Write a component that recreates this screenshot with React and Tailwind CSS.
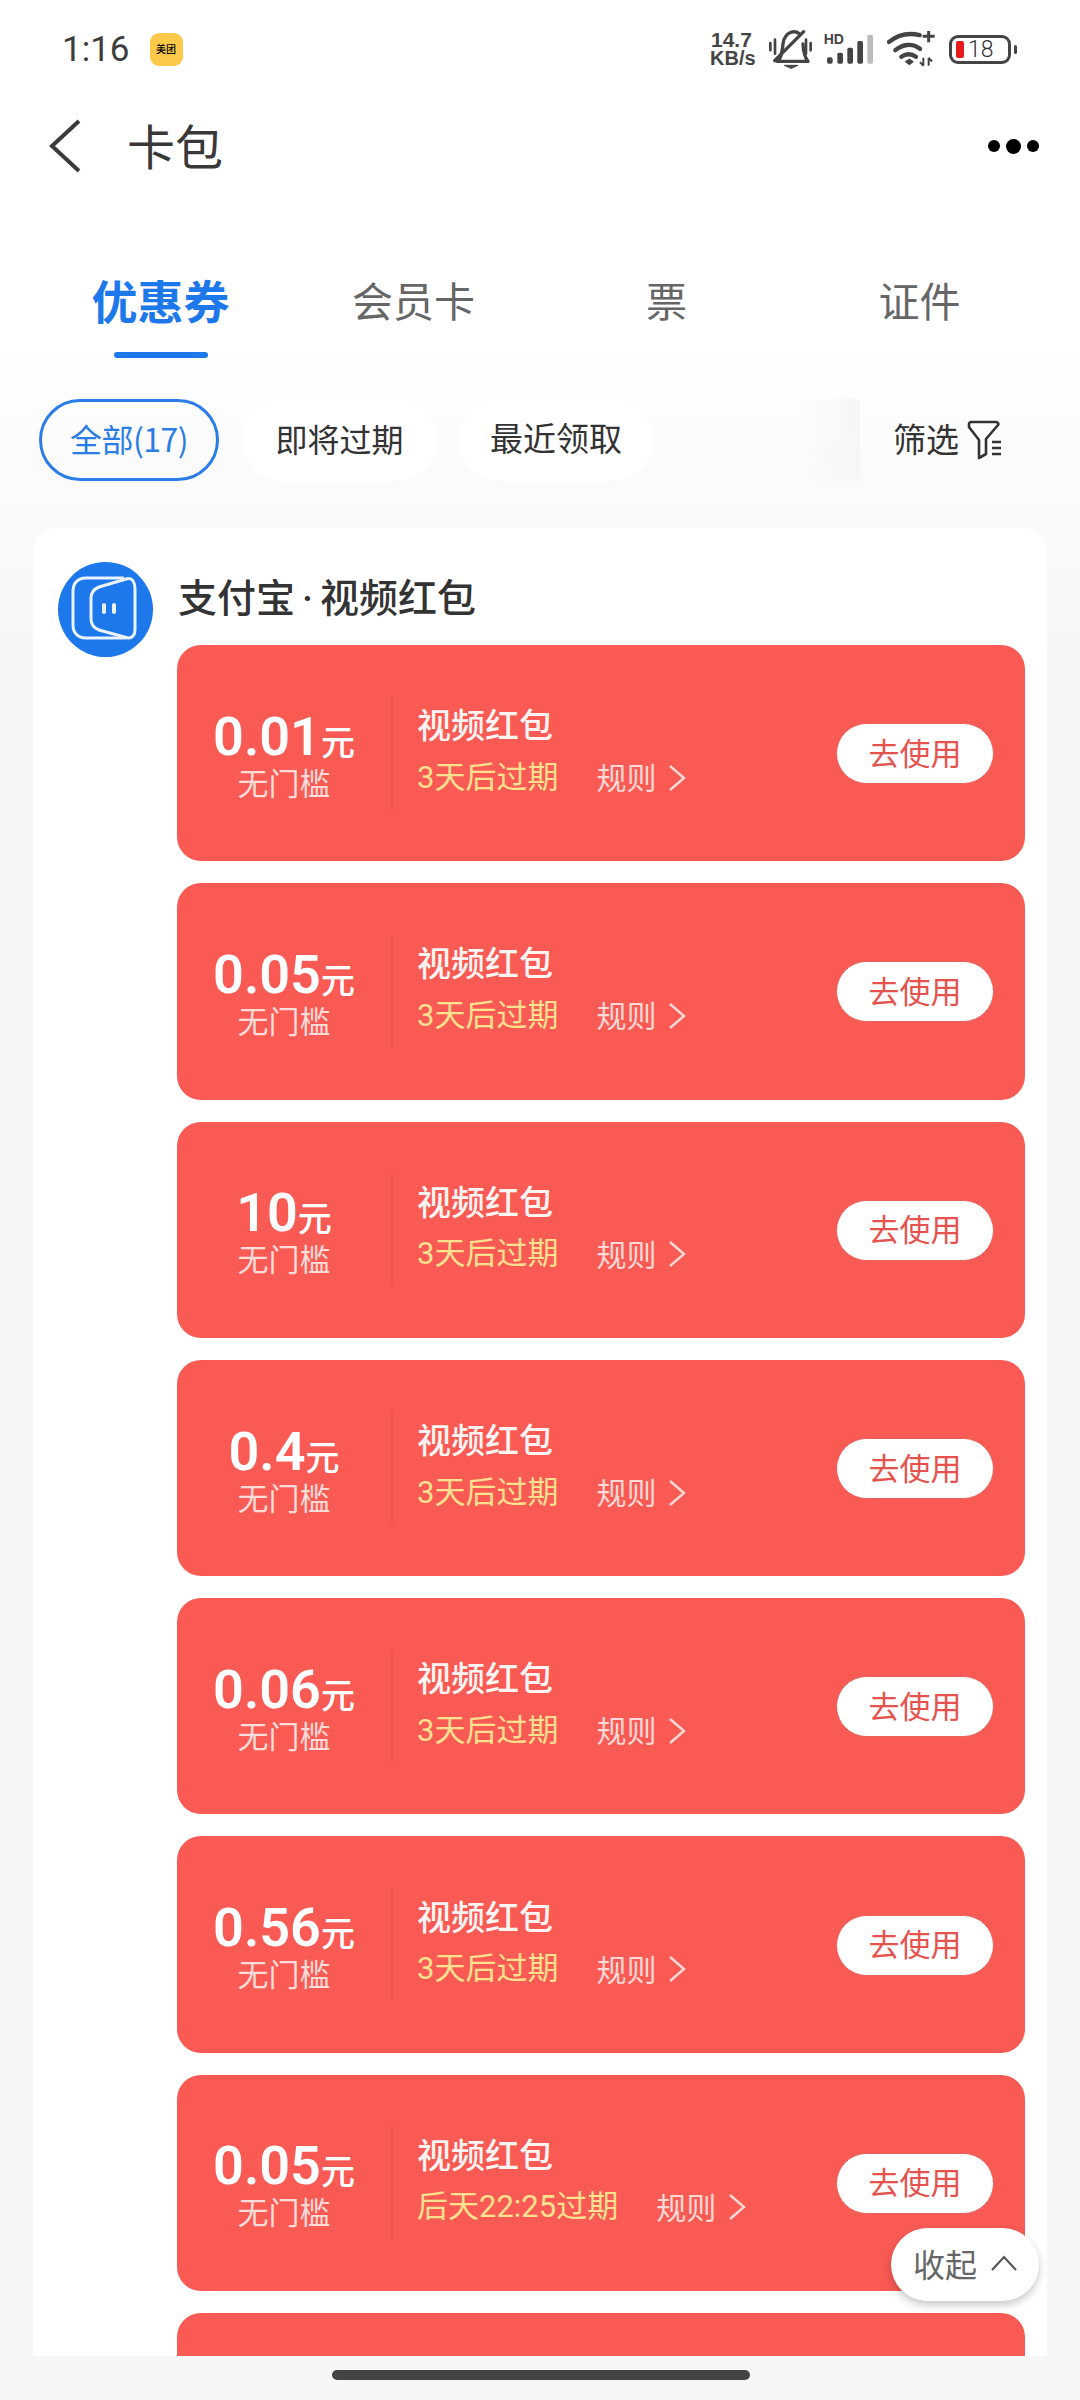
const CJK = '"Noto Sans CJK SC", "Noto Sans", sans-serif';
const NUM = 'Roboto, "Noto Sans CJK SC", sans-serif';

const coupons = [
  { n: '0.01', e: '3天后过期' },
  { n: '0.05', e: '3天后过期' },
  { n: '10', e: '3天后过期' },
  { n: '0.4', e: '3天后过期' },
  { n: '0.06', e: '3天后过期' },
  { n: '0.56', e: '3天后过期' },
  { n: '0.05', e: '后天22:25过期' },
];

function StatusBar() {
  return (
    <div className="box-content flex h-[64px] items-center justify-between pl-[62px] pr-[63px] pt-[17px] text-[#3d3d3d]">
      <div className="flex items-center">
        <span className="text-[35px] font-normal leading-none" style={{ fontFamily: 'Roboto, sans-serif' }}>1:16</span>
        <span className="ml-[20px] flex h-[33px] w-[33px] items-center justify-center rounded-[9px] bg-[#fcc94a] text-[10px] font-medium leading-none text-black" style={{ fontFamily: CJK }}>美团</span>
      </div>
      <div className="flex items-center">
        <div className="flex w-[50px] flex-col items-start font-bold leading-none text-[#444]" style={{ fontFamily: '"Liberation Sans", sans-serif' }}>
          <span className="pl-[1px] text-[21px] leading-[18px]">14.7</span>
          <span className="text-[20px] leading-[18px]">KB/s</span>
        </div>
        <svg className="ml-[8px]" width="45" height="40" viewBox="205 30 135 120" fill="none" stroke="#444" strokeWidth="10" strokeLinecap="round" strokeLinejoin="round">
          <path d="M212 72v22M226 62v42M333 72v22M319 62v42" strokeWidth="8" />
          <path d="M236 127c10-15 12-30 14-52 2-20 14-35 32-37 8 0 14 3 20 9" />
          <path d="M310 75c1 22 4 38 15 52H232" />
          <path d="M255 139h40l-20 9z" fill="#444" strokeWidth="3" />
          <path d="M312 38 225 125" />
        </svg>
        <svg className="ml-[11px] overflow-visible" width="50" height="30" viewBox="375 42 150 90">
          <text x="374" y="72" fontSize="42" fontWeight="700" fill="#444" fontFamily="Liberation Sans">HD</text>
          <rect x="384" y="112" width="17" height="19" rx="6" fill="#444" />
          <rect x="415" y="98" width="17" height="33" rx="5" fill="#444" />
          <rect x="445" y="83" width="17" height="48" rx="5" fill="#444" />
          <rect x="475" y="63" width="17" height="68" rx="5" fill="#444" />
          <rect x="505" y="44" width="17" height="87" rx="5" fill="#bbb" />
        </svg>
        <svg className="ml-[13px]" width="50" height="37" viewBox="25 35 150 110" fill="none" stroke="#444" strokeWidth="13" strokeLinecap="round">
          <path d="M31 67c28-22 60-28 92-20" />
          <path d="M50 92c22-18 50-22 74-4" />
          <path d="M68 112c14-10 30-10 44 0" />
          <path d="M78 127l14-10 14 10-14 10z" fill="#444" stroke="none" />
          <path d="M150 32v36M132 50h36" strokeWidth="9" strokeLinecap="butt" />
          <path d="M134 115v24M124 128l10 11M150 115v24M160 126l-10-11" strokeWidth="6" strokeLinecap="butt" />
        </svg>
        <div className="ml-[12px] flex h-[29px] w-[62px] items-center rounded-[9px] border-[3px] border-[#444] pl-[4px]">
          <span className="h-[17px] w-[8px] rounded-[2px] bg-[#e8191b]" />
          <span className="ml-[4px] text-[23px] font-light leading-none text-[#333]" style={{ fontFamily: 'Roboto, sans-serif' }}>18</span>
        </div>
        <span className="ml-[3px] h-[9px] w-[3px] rounded-full bg-[#444]" />
      </div>
    </div>
  );
}

function NavBar() {
  return (
    <div className="mt-[21px] flex h-[88px] items-center justify-between pl-[46px] pr-[41px]">
      <div className="flex items-center">
        <svg width="36" height="54" viewBox="0 0 36 54" fill="none" stroke="#3a3a3a" strokeWidth="4">
          <path d="M33 2 6 27l27 25" />
        </svg>
        <span className="ml-[45px] pb-[5px] text-[48px] leading-none text-[#383838]" style={{ fontFamily: CJK }}>卡包</span>
      </div>
      <div className="flex items-center gap-[6px]">
        <span className="h-[12px] w-[12px] rounded-full bg-black" />
        <span className="h-[15px] w-[15px] rounded-full bg-black" />
        <span className="h-[12px] w-[12px] rounded-full bg-black" />
      </div>
    </div>
  );
}

function Tabs() {
  const tabs = ['优惠券', '会员卡', '票', '证件'];
  return (
    <div className="mt-[78px] grid grid-cols-4 px-[34px]">
      {tabs.map((t, i) => (
        <div key={t} className="flex flex-col items-center">
          <span className={i === 0 ? 'text-[46px] font-bold leading-[62px] text-[#1d78ec]' : 'text-[41px] leading-[62px] text-[#666]'} style={{ fontFamily: CJK }}>{t}</span>
          <span className={i === 0 ? 'mt-[22px] h-[6px] w-[94px] rounded-full bg-[#1d78ec]' : 'mt-[22px] h-[6px] w-[94px]'} />
        </div>
      ))}
    </div>
  );
}

function Filters() {
  return (
    <div className="mt-[41px] flex h-[82px] items-center pl-[39px]" style={{ fontFamily: CJK }}>
      <span className="flex h-[82px] w-[180px] items-center justify-center rounded-full border-[3px] border-[#2a7de6] pb-[4px] text-[32px] tracking-[-0.5px] text-[#2a7de6]">全部(17)</span>
      <span className="ml-[23px] flex h-[82px] w-[195px] items-center justify-center rounded-full bg-white pb-[4px] text-[32px] text-[#333]">即将过期</span>
      <span className="ml-[22px] flex h-[82px] w-[194px] items-center justify-center rounded-full bg-white pb-[4px] text-[33px] text-[#333]">最近领取</span>
      <span className="ml-[145px] h-[82px] w-[62px] bg-gradient-to-r from-transparent to-[#f6f6f6]" />
      <span className="ml-[33px] pb-[4px] text-[33px] leading-none text-[#333]">筛选</span>
      <svg className="ml-[7px]" width="38" height="40" viewBox="0 0 38 40" fill="none" stroke="#333" strokeWidth="2.6" strokeLinejoin="round">
        <path d="M3 4c0-1 1-2 2-2h25c2 0 3 2 2 3L20 19v15l-7 4V20L3 7z" />
        <path d="M26 22h9M26 28h9M26 34h9" strokeWidth="2.4" />
      </svg>
    </div>
  );
}

function Logo() {
  return (
    <svg width="95" height="95" viewBox="0 0 95 95" className="shrink-0">
      <circle cx="47.5" cy="47.5" r="47.5" fill="#1d78ec" />
      <g fill="none" stroke="#eaf3ff" strokeWidth="3">
        <path d="M66 16H28C20 16 15 21 15 29V63C15 71 20 76 28 76H68" />
        <path d="M70 16.5 41 25C36 27 33 31 33 36V57C33 62 36 66 41 68L70 76C74 76.5 77 73 77 68V27C77 20 74 16 70 16.5Z" />
      </g>
      <rect x="44" y="41" width="4" height="11" rx="2" fill="#eaf3ff" />
      <rect x="54" y="41" width="4" height="11" rx="2" fill="#eaf3ff" />
    </svg>
  );
}

function Coupon({ n, e }) {
  return (
    <div className="flex h-[216.3px] shrink-0 items-center rounded-[24px] bg-[#f95a54]" style={{ fontFamily: CJK }}>
      <div className="flex w-[214px] shrink-0 flex-col items-center">
        <div className="flex h-[60px] items-baseline pt-[4px] text-white">
          <span className="text-[54px] font-semibold leading-[56px]" style={{ fontFamily: NUM }}>{n}</span>
          <span className="text-[34px] font-medium leading-[56px]">元</span>
        </div>
        <span className="mt-[-3px] text-[31px] leading-[40px] text-[#ffdcd8]">无门槛</span>
      </div>
      <div className="h-[115px] w-[2px] shrink-0 bg-[#ee5450]" />
      <div className="ml-[24px] mt-[-4px] flex flex-col">
        <span className="text-[34px] font-medium leading-[46px] text-[#fff4f2]">视频红包</span>
        <div className="mt-[7px] flex items-center">
          <span className="text-[31px] leading-[44px] text-[#ffe08f]" style={{ fontFamily: NUM }}>{e}</span>
          <span className="ml-[38px] pb-[3px] text-[30px] leading-[44px] text-[#ffd9d5]">规则</span>
          <svg className="ml-[12px]" width="18" height="28" viewBox="0 0 18 28" fill="none" stroke="#ffd9d5" strokeWidth="2.4">
            <path d="M2 2l14 12L2 26" />
          </svg>
        </div>
      </div>
      <button className="ml-auto mr-[31px] mt-[1px] flex h-[61px] w-[158px] items-center justify-center rounded-full border border-[#e9605b] bg-white pb-[5px] text-[31px] leading-none text-[#e6534e]">去使用</button>
    </div>
  );
}

export default function App() {
  return (
    <div className="relative h-[2400px] w-[1080px] overflow-hidden bg-gradient-to-b from-white from-[14%] to-[#f6f6f6] to-[27%]">
      <StatusBar />
      <NavBar />
      <Tabs />
      <Filters />
      <div className="mx-[33px] mt-[47px] flex h-[1828px] overflow-hidden rounded-t-[24px] bg-white pl-[25px] pr-[22px] pt-[34px]" style={{ fontFamily: CJK }}>
        <Logo />
        <div className="ml-[24px] flex min-w-0 flex-1 flex-col">
          <span className="ml-[1px] mt-[5px] text-[39px] font-medium leading-[56px] text-[#333]">支付宝<span className="mx-[7px]" style={{ fontFamily: 'Roboto, sans-serif' }}>·</span>视频红包</span>
          <div className="mt-[18px] flex flex-col gap-[22px]">
            {coupons.map((c, i) => <Coupon key={i} {...c} />)}
            <div className="h-[216px] shrink-0 rounded-[24px] bg-[#f95a54]" />
          </div>
        </div>
      </div>
      <div className="absolute left-[891px] top-[2228px] flex h-[73px] w-[148px] items-center justify-center rounded-full bg-white pb-[4px] shadow-[0_4px_8px_rgba(0,0,0,0.22)]" style={{ fontFamily: CJK }}>
        <span className="text-[32px] leading-none text-[#666]">收起</span>
        <svg className="ml-[14px]" width="26" height="16" viewBox="0 0 26 16" fill="none" stroke="#555" strokeWidth="2.2">
          <path d="M1 15 13 2l12 13" />
        </svg>
      </div>
      <div className="absolute left-[332px] top-[2370px] h-[10px] w-[418px] rounded-full bg-[#444]" />
    </div>
  );
}
